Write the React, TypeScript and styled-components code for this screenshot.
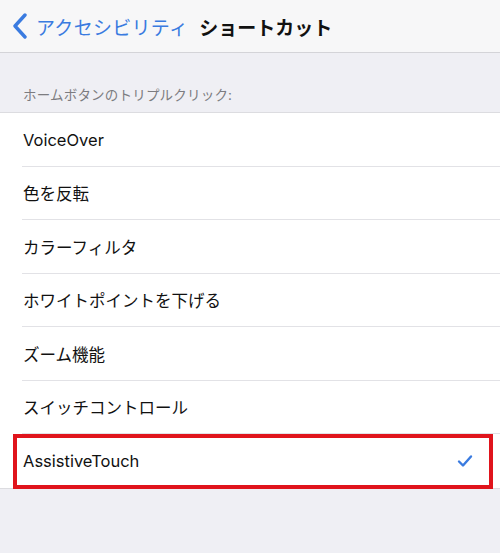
import styled, { createGlobalStyle } from 'styled-components';

const GlobalStyle = createGlobalStyle`
  html, body {
    margin: 0;
    padding: 0;
    background: #efeff4;
    font-family: 'Inter', 'Noto Sans CJK JP', sans-serif;
  }
`;

const items = [
  'VoiceOver',
  '色を反転',
  'カラーフィルタ',
  'ホワイトポイントを下げる',
  'ズーム機能',
  'スイッチコントロール',
  'AssistiveTouch',
];

const selected = 'AssistiveTouch';

export default function App() {
  return (
    <>
      <GlobalStyle />
      <Page>
        <NavBar>
          <BackButton>
            <svg width="16" height="26" viewBox="0 0 16 26">
              <path d="M13 2 L3 13 L13 24" fill="none" stroke="#3a7be0" strokeWidth="3.4" strokeLinecap="round" strokeLinejoin="round" />
            </svg>
            <BackLabel>アクセシビリティ</BackLabel>
          </BackButton>
          <Title>ショートカット</Title>
        </NavBar>
        <SectionHeader>ホームボタンのトリプルクリック:</SectionHeader>
        <List>
          {items.map((item, i) => (
            <Row key={item} last={i === items.length - 1} highlighted={item === selected}>
              <RowLabel>{item}</RowLabel>
              {item === selected && (
                <svg width="16" height="14" viewBox="0 0 16 14">
                  <path d="M2 7.5 L6 11.5 L14 2.5" fill="none" stroke="#3a7be0" strokeWidth="2.4" strokeLinecap="round" strokeLinejoin="round" />
                </svg>
              )}
            </Row>
          ))}
        </List>
      </Page>
    </>
  );
}

const Page = styled.div`
  width: 500px;
  min-height: 553px;
  background: #efeff4;
`;

const NavBar = styled.div`
  height: 52px;
  background: #f7f7f8;
  border-bottom: 1px solid #d4d4d8;
  display: flex;
  align-items: center;
  padding: 0 0 0 12px;
  gap: 11px;
`;

const BackButton = styled.div`
  display: flex;
  align-items: center;
  gap: 8px;
  color: #3a7be0;
`;

const BackLabel = styled.span`
  font-size: 19px;
  letter-spacing: 0.3px;
`;

const Title = styled.span`
  font-size: 19px;
  font-weight: 700;
  color: #111;
  letter-spacing: 0;
`;

const SectionHeader = styled.div`
  padding: 34px 0 8px 23px;
  font-size: 13.5px;
  color: #7c7c80;
  line-height: 17px;
  letter-spacing: 0.2px;
`;

const List = styled.div`
  background: #fff;
  border-top: 1px solid #dcdce0;
  border-bottom: 1px solid #dcdce0;
`;

const Row = styled.div<{ last: boolean; highlighted: boolean }>`
  position: relative;
  height: 53.5px;
  box-sizing: border-box;
  display: flex;
  align-items: center;
  justify-content: space-between;
  padding: 0 27px 0 23px;
  &::before {
    content: '';
    display: ${({ last }) => (last ? 'none' : 'block')};
    position: absolute;
    left: 22px;
    right: 0;
    bottom: 0;
    border-bottom: 1px solid #e2e2e6;
  }
  &::after {
    content: '';
    display: ${({ highlighted }) => (highlighted ? 'block' : 'none')};
    position: absolute;
    top: 0;
    bottom: -1px;
    left: 13px;
    right: 7px;
    border: 4px solid #e0141c;
  }
`;

const RowLabel = styled.span`
  font-size: 16.5px;
  color: #111;
`;
